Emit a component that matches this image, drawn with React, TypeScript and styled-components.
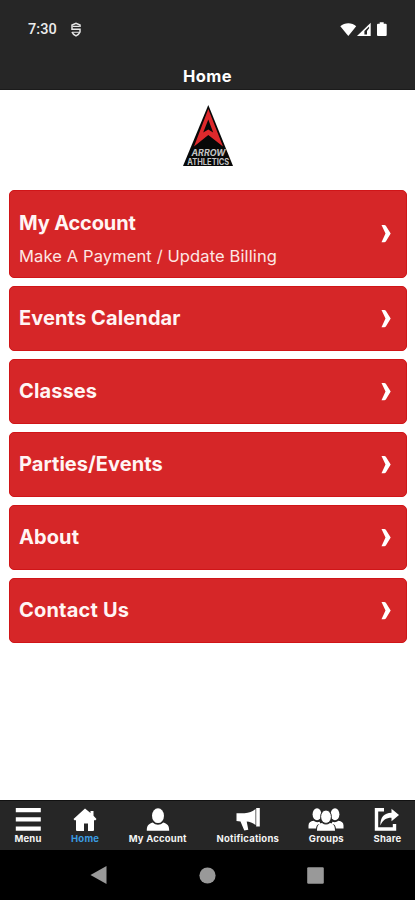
import React from "react";
import styled, { createGlobalStyle } from "styled-components";

const GlobalStyle = createGlobalStyle`
  * { box-sizing: border-box; }
  body { margin: 0; background: #fff; font-family: Inter, "Liberation Sans", sans-serif; }
`;

const Screen = styled.div`
  width: 415px;
  height: 900px;
  display: flex;
  flex-direction: column;
  background: #fff;
  overflow: hidden;
`;

const Header = styled.header`
  height: 90px;
  flex: none;
  background: #262626;
  border-bottom: 1px solid #1b1b1b;
  color: #fff;
`;

const StatusBar = styled.div`
  height: 60px;
  padding: 0 28px;
  display: flex;
  align-items: center;
`;

const Clock = styled.span`
  width: 30px;
  font: 500 14.5px/20px Roboto, sans-serif;
  letter-spacing: 0.1px;
  color: #ececec;
  white-space: nowrap;
`;

const StatusShield = styled.svg`
  margin: 0 0 1px 12px;
`;

const StatusIcons = styled.svg`
  margin: 0 -1px 1px auto;
`;

const Title = styled.h1`
  margin: 0;
  text-align: center;
  font-size: 16.5px;
  line-height: 32px;
  font-weight: 700;
  letter-spacing: 0.4px;
`;

const LogoArea = styled.div`
  height: 100px;
  flex: none;
  padding: 15px 0 0 182px;
`;

const Cards = styled.main`
  flex: 1;
  display: flex;
  flex-direction: column;
  gap: 8px;
  padding: 0 8px 0 9px;
`;

const Card = styled.a<{ $tall?: boolean }>`
  height: ${(p) => (p.$tall ? 88 : 65)}px;
  display: flex;
  align-items: center;
  justify-content: space-between;
  padding: 0 14px 0 9px;
  border-radius: 5px;
  border: 1px solid #d01518;
  background: #d62628;
  color: #fff;
`;

const CardText = styled.div`
  display: flex;
  flex-direction: column;
  gap: 7px;
`;

const CardTitle = styled.span<{ $spacing: number }>`
  font-size: 20px;
  line-height: 27px;
  font-weight: 700;
  letter-spacing: ${(p) => p.$spacing}px;
  white-space: nowrap;
  color: #fff5f4;
`;

const CardSub = styled.span`
  font-size: 16.5px;
  line-height: 24px;
  margin-bottom: -10px;
  letter-spacing: 0.12px;
  color: #fde6e4;
  white-space: nowrap;
`;

const TabBar = styled.nav`
  height: 50px;
  flex: none;
  padding: 7px 13px 0 14px;
  display: flex;
  justify-content: space-between;
  background: #262626;
  border-top: 1px solid #111;
`;

const Tab = styled.div<{ $width: number; $active?: boolean }>`
  width: ${(p) => p.$width}px;
  display: flex;
  flex-direction: column;
  align-items: center;
  font-size: 9.5px;
  line-height: 12px;
  font-weight: 700;
  letter-spacing: 0.2px;
  white-space: nowrap;
  color: ${(p) => (p.$active ? "#3a9be0" : "#f4f4f4")};
`;

const TabIcon = styled.svg`
  flex: none;
  height: 24px;
  margin-bottom: 1px;
  fill: #fff;
`;

const SystemNav = styled.footer`
  height: 50px;
  flex: none;
  display: flex;
  align-items: center;
  justify-content: space-between;
  padding: 0 91px 0 90px;
  background: #000;
`;

const Logo = () => (
  <svg width="52" height="62" viewBox="0 0 52 62" role="img" aria-label="Arrow Athletics">
    <path d="M26.3 0 51 61H1Z" fill="#080808" />
    <path d="M26.3 4 41 41.5 26.3 30 12 41.5Z" fill="#df292c" />
    <path d="M26.3 14.5 31.2 27.5 26.3 24.5 21.2 27.5Z" fill="#080808" />
    <g fill="#c4c4c4" fontFamily="Inter, sans-serif" fontWeight="700" textAnchor="middle">
      <text x="26.5" y="51.3" fontSize="8.6" fontStyle="italic" textLength="34" lengthAdjust="spacingAndGlyphs">ARROW</text>
      <text x="26.3" y="59.6" fontSize="8.6" textLength="42" lengthAdjust="spacingAndGlyphs">ATHLETICS</text>
    </g>
  </svg>
);

const Chevron = () => (
  <svg width="12" height="20" viewBox="0 0 12 20" aria-hidden="true">
    <path d="M1.5 1h2.8q1.1 0 1.7 1.1L10.7 9.5 6 17.2q-.6 1.1-1.7 1.1H1.5L5.5 9.5Z" fill="#fff" />
  </svg>
);

const items = [
  { title: "My Account", sub: "Make A Payment / Update Billing", spacing: -0.15 },
  { title: "Events Calendar", spacing: 0.12 },
  { title: "Classes", spacing: 0.1 },
  { title: "Parties/Events", spacing: 0.05 },
  { title: "About", spacing: 0.1 },
  { title: "Contact Us", spacing: 0.2 },
];

const tabs = [
  { label: "Menu", width: 28, iconWidth: 26, icon: <path d="M.8 0h25v4.3h-25zM.8 9.3h25v4.3h-25zM.8 18.6h25v4.2h-25z" /> },
  { label: "Home", width: 29, iconWidth: 24, active: true, icon: <path d="M12 .5 17.5 5V3h3v4.8l3 3.2-1 1.3H21V22q0 1-1 1h-5v-7.5h-4V23H4q-1 0-1-1v-9.7H1.5l-1-1.3Z" /> },
  { label: "My Account", width: 59, iconWidth: 24, icon: <><ellipse cx="12" cy="7.7" rx="6" ry="7.4" /><path d="M.8 22.8c0-5 1.4-7 6-8.3 3.2 3 7.2 3 10.4 0 4.6 1.3 6 3.3 6 8.3Z" /></> },
  { label: "Notifications", width: 64, iconWidth: 26, icon: <><path d="M1.5 5.2h8C14 5 17.5 3.4 20.5 1v16c-3-2.4-5.8-3.3-8.8-3.5l1.6 8.3-4 .6-3.8-8.9-4-.5Z" /><path d="M21.2 0h3.6v18.5h-3.6z" /></> },
  { label: "Groups", width: 36, iconWidth: 36, icon: <><ellipse cx="9" cy="6.2" rx="4.4" ry="6" /><ellipse cx="27" cy="6.2" rx="4.4" ry="6" /><path d="M.5 20.5v-3c0-3 2-4 5-4.7 2 1.5 4 1.7 6 1l1 2c-3 .7-4 1.3-4.4 4.7ZM35.5 20.5v-3c0-3-2-4-5-4.7-2 1.5-4 1.7-6 1l-1 2c3 .7 4 1.3 4.4 4.7Z" /><ellipse cx="18" cy="8.7" rx="5.4" ry="6.7" stroke="#262626" /><path d="M9 22.8c0-5 1.4-7 5-7.8 2.7 2 5.3 2 8 0 3.6.8 5 2.8 5 7.8Z" /></> },
  { label: "Share", width: 29, iconWidth: 28, icon: <><path d="M11 1.8H3.5V21h18v-5" fill="none" stroke="#fff" strokeWidth="3.4" /><path d="M7.3 17.5C7.4 9 11 5 18.5 4.7V.8L26 7l-7.5 6.3V9.7C13 9.7 9.8 12 7.3 17.5Z" /></> },
];

export default function App() {
  return (
    <Screen>
      <GlobalStyle />
      <Header>
        <StatusBar>
          <Clock>7:30</Clock>
          <StatusShield width="12" height="15" viewBox="0 0 12 15" fill="none" stroke="#e6e6e6" strokeWidth="1.5">
            <path d="M10 5V3L6 1.2 2 3v4.2h8V10c-.6 1.8-2 2.8-4 3.8C4 12.8 2.6 11.8 2 10" />
            <path d="M2.5 4.4h7M2.5 10.2h7" strokeWidth="1.1" />
          </StatusShield>
          <StatusIcons width="48" height="15" viewBox="0 0 48 15" fill="#fff">
            <path d="M.3 4.2C4.5.1 12.2.1 16.2 4.2L8.3 14Z" />
            <path d="M17 14 30.7.8V14Z" />
            <path d="M24.4 12.6V9l4.7-4.6v1.8L27 9v3.6Z" fill="#262626" />
            <path d="M39.7.2h4v1.6h2q1 0 1 1V13q0 1-1 1H38q-1 0-1-1V2.8q0-1 1-1h1.7Z" />
          </StatusIcons>
        </StatusBar>
        <Title>Home</Title>
      </Header>
      <LogoArea><Logo /></LogoArea>
      <Cards>
        {items.map((item) => (
          <Card key={item.title} $tall={!!item.sub}>
            <CardText>
              <CardTitle $spacing={item.spacing}>{item.title}</CardTitle>
              {item.sub && <CardSub>{item.sub}</CardSub>}
            </CardText>
            <Chevron />
          </Card>
        ))}
      </Cards>
      <TabBar>
        {tabs.map((tab) => (
          <Tab key={tab.label} $width={tab.width} $active={tab.active}>
            <TabIcon width={tab.iconWidth} height="24" viewBox={`0 0 ${tab.iconWidth} 24`}>{tab.icon}</TabIcon>
            {tab.label}
          </Tab>
        ))}
      </TabBar>
      <SystemNav>
        <svg width="17" height="20" viewBox="0 0 17 20"><path d="M.5 10 16.5 1v18Z" fill="#999" /></svg>
        <svg width="17" height="17" viewBox="0 0 17 17"><circle cx="8.5" cy="8.5" r="8.1" fill="#999" /></svg>
        <svg width="17" height="17" viewBox="0 0 17 17"><rect x=".2" y=".2" width="16.6" height="16.6" rx="1.2" fill="#999" /></svg>
      </SystemNav>
    </Screen>
  );
}
